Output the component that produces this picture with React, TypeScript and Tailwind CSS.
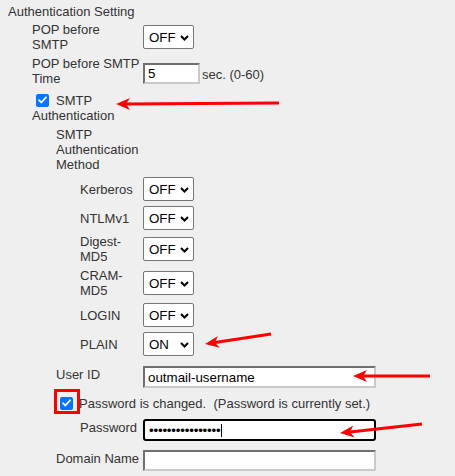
import React from 'react';

const FONT = "font-['Liberation_Sans',Arial,sans-serif]";

// Chrome-style blue checked checkbox
const CheckBox: React.FC<{ className?: string }> = ({ className = '' }) => (
  <span
    className={`inline-flex items-center justify-center w-[13px] h-[13px] rounded-[2px] bg-[#0075ff] shrink-0 ${className}`}
  >
    <svg width="9" height="8" viewBox="0 0 9 8" fill="none">
      <path d="M1 4.2 L3.4 6.5 L8 1.3" stroke="white" strokeWidth="1.8" strokeLinecap="round" strokeLinejoin="round" />
    </svg>
  </span>
);

const Select: React.FC<{ value?: string }> = ({ value = 'OFF' }) => (
  <div className="relative w-[51px] h-[24px] shrink-0">
    <select
      defaultValue={value}
      className={`appearance-none w-full h-full bg-white border border-[#767676] rounded-[2px] pl-[5px] text-[13.33px] text-black outline-none ${FONT}`}
    >
      <option>OFF</option>
      <option>ON</option>
    </select>
    <svg
      className="absolute right-[5px] top-[10px] pointer-events-none"
      width="9"
      height="6"
      viewBox="0 0 9 6"
      fill="none"
    >
      <path d="M1 1 L4.5 4.5 L8 1" stroke="black" strokeWidth="2" />
    </svg>
  </div>
);

// classic inset text field
const inset =
  'bg-white border-2 border-t-[#6f6f6f] border-l-[#6f6f6f] border-b-[#c9c9c9] border-r-[#c9c9c9] px-[3px] text-[13.33px] text-black outline-none';

const Arrow: React.FC<{ x1: number; y1: number; x2: number; y2: number }> = ({ x1, y1, x2, y2 }) => {
  // x2,y2 = tip
  const a = Math.atan2(y1 - y2, x1 - x2);
  const len = 14;
  const w = 6;
  const bx = x2 + Math.cos(a) * len;
  const by = y2 + Math.sin(a) * len;
  const nx = -Math.sin(a) * w;
  const ny = Math.cos(a) * w;
  const mx = x2 + Math.cos(a) * (len - 4);
  const my = y2 + Math.sin(a) * (len - 4);
  return (
    <g>
      <line x1={x1} y1={y1} x2={mx} y2={my} stroke="#ff0000" strokeWidth="3" />
      <polygon
        points={`${x2},${y2} ${bx + nx},${by + ny} ${mx},${my} ${bx - nx},${by - ny}`}
        fill="#ff0000"
      />
    </g>
  );
};

export default function App() {
  return (
    <div
      className={`relative w-[455px] h-[476px] overflow-hidden bg-[#efefef] text-[#333333] text-[13px] leading-[15px] ${FONT}`}
    >
      <div className="pt-[4px] pl-[8px]">Authentication Setting</div>

      {/* POP before SMTP */}
      <div className="mt-[3px] flex items-center h-[30px]">
        <div className="w-[143px] pl-[32px]">
          POP before
          <br />
          SMTP
        </div>
        <Select />
      </div>

      <div className="mt-[4px] flex items-start h-[30px]">
        <div className="w-[143px] pl-[32px]">
          POP before SMTP
          <br />
          Time
        </div>
        <input type="text" defaultValue="5" className={`mt-[7px] w-[57px] h-[21px] ${inset} ${FONT}`} />
        <span className="mt-[11px] ml-[2px]">sec. (0-60)</span>
      </div>

      {/* SMTP Authentication */}
      <div className="mt-[6px] pl-[32px]">
        <div className="flex items-center h-[16px]">
          <CheckBox className="ml-[4px] mr-[7px]" />
          <span>SMTP</span>
        </div>
        <div>Authentication</div>
      </div>

      <div className="mt-[4px] pl-[56px]">
        SMTP
        <br />
        Authentication
        <br />
        Method
      </div>

      <div className="mt-[4px] flex items-center h-[26px]">
        <div className="w-[143px] pl-[80px]">Kerberos</div>
        <Select />
      </div>
      <div className="mt-[3px] flex items-center h-[26px]">
        <div className="w-[143px] pl-[80px]">NTLMv1</div>
        <Select />
      </div>
      <div className="mt-[3px] flex items-center h-[30px]">
        <div className="w-[143px] pl-[80px]">
          Digest-
          <br />
          MD5
        </div>
        <Select />
      </div>
      <div className="mt-[4px] flex items-center h-[30px]">
        <div className="w-[143px] pl-[80px]">
          CRAM-
          <br />
          MD5
        </div>
        <Select />
      </div>
      <div className="mt-[4px] flex items-center h-[26px]">
        <div className="w-[143px] pl-[80px]">LOGIN</div>
        <Select />
      </div>
      <div className="mt-[3px] flex items-center h-[26px]">
        <div className="w-[143px] pl-[80px]">PLAIN</div>
        <Select value="ON" />
      </div>

      {/* User ID */}
      <div className="mt-[9px] flex items-start">
        <div className="w-[143px] pl-[56px] pt-[1px]">User ID</div>
        <input type="text" defaultValue="outmail-username" className={`w-[233px] h-[22px] ${inset} ${FONT}`} />
      </div>

      <div className="mt-[7px] flex items-center h-[16px] pl-[60px]">
        <span className="relative inline-flex">
          <CheckBox />
          <span className="absolute left-[-6px] top-[-8px] w-[26px] h-[25px] border-[3px] border-[#ff0000]" />
        </span>
        <span className="ml-[6px]">Password is changed.&nbsp; (Password is currently set.)</span>
      </div>

      <div className="mt-[8px] flex items-start">
        <div className="w-[143px] pl-[80px] pt-[1px]">Password</div>
        <div
          className={`flex items-center w-[233px] h-[22px] bg-white border-2 border-black rounded-[3px] pl-[4px] text-black text-[13.33px]`}
        >
          <span className="tracking-[-0.2px]">••••••••••••••••</span>
          <span className="ml-[1px] w-[1px] h-[13px] bg-black" />
        </div>
      </div>

      <div className="mt-[9px] flex items-start">
        <div className="w-[143px] pl-[56px] pt-[1px]">Domain Name</div>
        <input type="text" defaultValue="" className={`w-[233px] h-[21px] ${inset} ${FONT}`} />
      </div>

      {/* red annotation arrows */}
      <svg className="absolute inset-0 pointer-events-none" width="455" height="476">
        <Arrow x1={279} y1={103} x2={116} y2={104} />
        <Arrow x1={271} y1={334} x2={205} y2={344} />
        <Arrow x1={430} y1={376} x2={353} y2={376} />
        <Arrow x1={422} y1={424} x2={340} y2={433} />
      </svg>
    </div>
  );
}
